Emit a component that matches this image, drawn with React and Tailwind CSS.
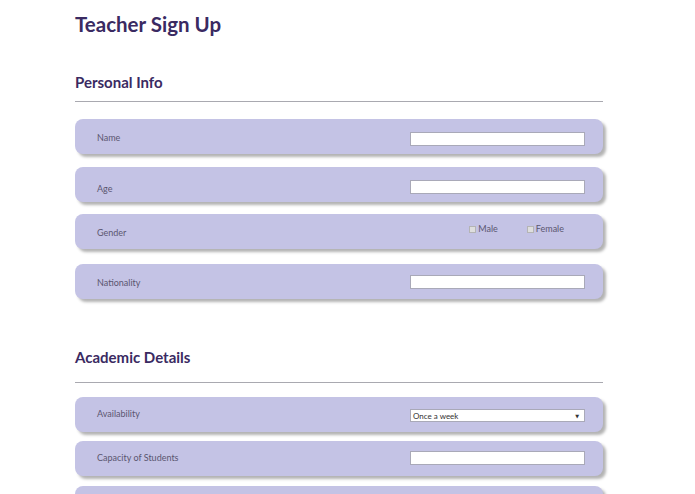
import React from "react";

const font = { fontFamily: '"Century Gothic", "Lato", "DejaVu Sans", sans-serif' };

function Row({ label, children, lt, ct, className = "" }) {
  return (
    <div className={`flex h-[35px] w-[528px] shrink-0 items-start justify-between rounded-[8px] bg-[#c4c3e5] pl-[22px] pr-[18px] shadow-[3px_3px_3px_rgba(0,0,0,0.3)] ${className}`}>
      <span className={`text-[9px] leading-[12px] text-[#5b5670] ${lt}`}>{label}</span>
      <div className={ct}>{children}</div>
    </div>
  );
}

function TextBox() {
  return <div className="h-[14px] w-[175px] border border-[#a9a9b8] bg-white" />;
}

function Select({ value }) {
  return (
    <div className="flex h-[13px] w-[175px] items-center justify-between border border-[#a9a9b8] bg-white pl-[2px] pr-[5px] text-[8px] leading-[10px] text-[#333]">
      <span>{value}</span>
      <span className="text-[5px]">▼</span>
    </div>
  );
}

function Check({ label }) {
  return (
    <span className="flex items-center gap-[2px] text-[9px] leading-[10px] text-[#5b5670]">
      <span className="h-[7px] w-[7px] border border-[#b4b4b4] bg-[#dedede]" />
      {label}
    </span>
  );
}

export default function App() {
  return (
    <div className="h-[494px] overflow-hidden bg-white pl-[75px]" style={font}>
      <h1 className="pt-[11px] text-[20.5px] font-bold leading-[26px] text-[#3a2a62]">Teacher Sign Up</h1>

      <h2 className="mt-[35px] text-[15px] font-bold leading-[20px] text-[#3a2a62]">Personal Info</h2>
      <div className="mt-[9px] h-px w-[528px] bg-[#a9a9b0]" />

      <div className="mt-[17px] flex flex-col">
        <Row label="Name" lt="mt-[13px]" ct="mt-[13px]">
          <TextBox />
        </Row>
        <Row label="Age" lt="mt-[16px]" ct="mt-[13px]" className="mt-[13px]">
          <TextBox />
        </Row>
        <Row label="Gender" lt="mt-[13px]" ct="mt-[10px]" className="mt-[12px]">
          <div className="mr-[21px] flex gap-[29px]">
            <Check label="Male" />
            <Check label="Female" />
          </div>
        </Row>
        <Row label="Nationality" lt="mt-[13px]" ct="mt-[11px]" className="mt-[15px]">
          <TextBox />
        </Row>
      </div>

      <h2 className="mt-[48px] text-[15px] font-bold leading-[20px] text-[#3a2a62]">Academic Details</h2>
      <div className="mt-[15px] h-px w-[528px] bg-[#a9a9b0]" />

      <div className="mt-[14px] flex flex-col">
        <Row label="Availability" lt="mt-[11px]" ct="mt-[12px]">
          <Select value="Once a week" />
        </Row>
        <Row label="Capacity of Students" lt="mt-[11px]" ct="mt-[10px]" className="mt-[9px]">
          <TextBox />
        </Row>
        <Row label="" lt="" ct="" className="mt-[10px]" />
      </div>
    </div>
  );
}
